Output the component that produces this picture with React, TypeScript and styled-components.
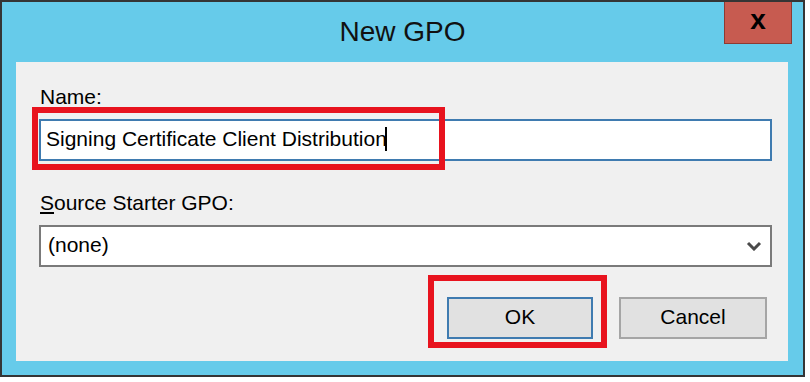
import React, { FC } from 'react';
import styled, { createGlobalStyle } from 'styled-components';

// === global ===
const GlobalStyle = createGlobalStyle`
  html, body { margin: 0; padding: 0; background: #ffffff; }
  body { font-family: "Liberation Sans", Arial, sans-serif; }
  * { box-sizing: border-box; }
`;

// === dialog ===
const App: FC = () => {
  return (
    <>
      <GlobalStyle />
      <Window>
        <TitleBar>
          <span />
          <Title>New GPO</Title>
          <CloseWrap>
            <CloseBtn type="button" aria-label="Close">x</CloseBtn>
          </CloseWrap>
        </TitleBar>

        <Client>
          <Label>Name:</Label>
          <TextField $focused>
            Signing Certificate Client Distribution<Caret />
          </TextField>

          <Label $gap={30}><u>S</u>ource Starter GPO:</Label>
          <TextField>
            <span>(none)</span>
            <Chevron width="16" height="10" viewBox="0 0 16 10">
              <polyline points="2,2 8,8 14,2" fill="none" stroke="#4a4a4a" strokeWidth="3" />
            </Chevron>
          </TextField>

          <ButtonRow>
            <DlgButton type="button" $default>OK</DlgButton>
            <DlgButton type="button">Cancel</DlgButton>
          </ButtonRow>

          {/* red annotation boxes */}
          <Highlight $left={16} $top={45} $w={413} $h={63} />
          <Highlight $left={412} $top={213} $w={179} $h={73} />
        </Client>
      </Window>
    </>
  );
};

// === style ===
const Window = styled.div`
  width: 805px;
  height: 377px;
  border: 2px solid #353535;
  background: #66cbea;
  display: flex;
  flex-direction: column;
`;

const TitleBar = styled.div`
  height: 60px;
  display: grid;
  grid-template-columns: 1fr auto 1fr;
  align-items: start;
`;

const Title = styled.div`
  align-self: center;
  font-size: 28px;
  color: #111;
  letter-spacing: 0;
`;

const CloseWrap = styled.div`
  display: flex;
  justify-content: flex-end;
  padding-right: 11px;
`;

const CloseBtn = styled.button`
  width: 68px;
  height: 42px;
  border: 1px solid #8e3a32;
  border-top: none;
  background: #c75b50;
  color: #000;
  font-family: "Liberation Sans", Arial, sans-serif;
  font-weight: bold;
  font-size: 28px;
  line-height: 1;
  padding: 0 0 6px;
  display: flex;
  align-items: center;
  justify-content: center;
`;

const Client = styled.div`
  position: relative;
  flex: 1;
  margin: 0 15px 14px 14px;
  background: #f0f0f0;
  padding: 23px 16px 0 23px;
  display: flex;
  flex-direction: column;
`;

const Label = styled.div<{ $gap?: number }>`
  margin-top: ${(p) => p.$gap ?? 0}px;
  font-size: 21px;
  line-height: 24px;
  color: #000;
  margin-bottom: 10px;
  margin-left: 1px;
`;

const TextField = styled.div<{ $focused?: boolean }>`
  height: 42px;
  display: flex;
  align-items: center;
  justify-content: space-between;
  background: #fff;
  border: 2px solid ${(p) => (p.$focused ? '#3f7bb0' : '#7a7a7a')};
  padding: 0 8px 2px ${(p) => (p.$focused ? 5 : 7)}px;
  font-size: 21px;
  color: #000;
  white-space: nowrap;
`;

const Caret = styled.span`
  display: inline-block;
  width: 2px;
  height: 24px;
  background: #000;
  margin-left: -2px;
  vertical-align: middle;
  margin-right: auto;
`;

const Chevron = styled.svg`
  display: block;
  margin-top: 2px;
`;

const ButtonRow = styled.div`
  margin-top: 30px;
  display: flex;
  justify-content: flex-end;
  gap: 26px;
  padding-right: 5px;
`;

const DlgButton = styled.button<{ $default?: boolean }>`
  width: ${(p) => (p.$default ? 146 : 148)}px;
  height: 42px;
  background: #e1e1e1;
  border: 2px solid ${(p) => (p.$default ? '#3f7bb0' : '#a5a5a5')};
  font-family: "Liberation Sans", Arial, sans-serif;
  font-size: 21px;
  color: #000;
  padding: 0 0 2px;
`;

const Highlight = styled.div<{ $left: number; $top: number; $w: number; $h: number }>`
  position: absolute;
  left: ${(p) => p.$left}px;
  top: ${(p) => p.$top}px;
  width: ${(p) => p.$w}px;
  height: ${(p) => p.$h}px;
  border: 6px solid #e8131e;
  pointer-events: none;
`;

export default App;
